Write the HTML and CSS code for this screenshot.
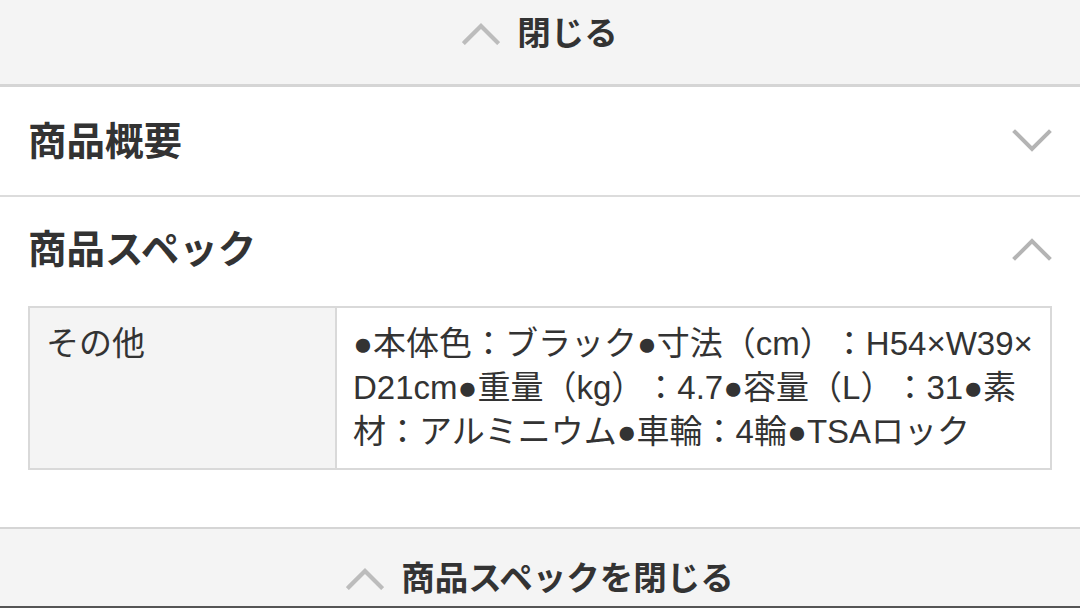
FILE: index.html
```html
<!DOCTYPE html>
<html lang="ja">
<head>
<meta charset="utf-8">
<link rel="stylesheet" href="styles.css">
</head>
<body>
<div class="page">
  <div class="close-bar close-top">
    <svg class="chev-up" viewBox="0 0 40 24" width="38" height="23"><polyline points="3,21 20,4 37,21" fill="none" stroke="#bcbcbc" stroke-width="4.5" stroke-linejoin="miter" stroke-linecap="square"/></svg>
    <span class="close-label">閉じる</span>
  </div>
  <div class="acc-head acc-first">
    <h2 class="acc-title">商品概要</h2>
    <svg class="acc-chev" viewBox="0 0 40 24" width="40" height="24"><polyline points="3,3 20,20 37,3" fill="none" stroke="#b4b4b4" stroke-width="4" stroke-linecap="square"/></svg>
  </div>
  <div class="acc-section">
    <div class="acc-head acc-open">
      <h2 class="acc-title">商品スペック</h2>
      <svg class="acc-chev" viewBox="0 0 40 24" width="40" height="24"><polyline points="3,21 20,4 37,21" fill="none" stroke="#b4b4b4" stroke-width="4" stroke-linecap="square"/></svg>
    </div>
    <table class="spec">
      <tr>
        <th class="spec-key">その他</th>
        <td class="spec-val">●本体色：ブラック●寸法（cm）：H54×W39×<br>D21cm●重量（kg）：4.7●容量（L）：31●素<br>材：アルミニウム●車輪：4輪●TSAロック</td>
      </tr>
    </table>
  </div>
  <div class="close-bar close-bottom">
    <svg class="chev-up" viewBox="0 0 40 24" width="38" height="23"><polyline points="3,21 20,4 37,21" fill="none" stroke="#bcbcbc" stroke-width="4.5" stroke-linecap="square"/></svg>
    <span class="close-label">商品スペックを閉じる</span>
  </div>
  <div class="bottom-edge"></div>
</div>
</body>
</html>
```
FILE: styles.css
```css
html, body {
  margin: 0;
  padding: 0;
  background: #ffffff;
  overflow: hidden;
}
body {
  width: 1080px;
  height: 608px;
  font-family: "Liberation Sans", "Noto Sans CJK JP", sans-serif;
  color: #333333;
  text-spacing-trim: space-all;
}
.page {
  display: flex;
  flex-direction: column;
}
.close-bar {
  background: #f4f4f4;
  display: flex;
  justify-content: center;
  align-items: center;
  gap: 17px;
}
.close-top {
  height: 62px;
  padding-bottom: 22px;
  border-bottom: 3px solid #d5d5d5;
}
.close-bottom {
  height: 94px;
  padding-bottom: 4px;
  border-top: 2px solid #d5d5d5;
  flex-shrink: 0;
}
.close-label {
  font-family: "Noto Sans CJK JP", sans-serif;
  font-weight: 700;
  font-size: 33.5px;
  line-height: 1;
  color: #333333;
}
.chev-up {
  display: block;
  margin-top: 4px;
}
.acc-head {
  display: flex;
  align-items: center;
  justify-content: space-between;
  padding: 0 28px;
}
.acc-first {
  height: 102px;
  padding-bottom: 6px;
  border-bottom: 2px solid #dcdcdc;
}
.acc-open {
  height: 98px;
  padding-bottom: 6px;
}
.acc-title {
  margin: 0;
  font-family: "Noto Sans CJK JP", sans-serif;
  font-weight: 700;
  font-size: 38.5px;
  line-height: 1;
  color: #333333;
}
.acc-chev {
  display: block;
  margin-top: 6px;
}
.acc-section {
  padding-bottom: 57px;
}
.spec {
  margin: 5px 28px 0 28px;
  width: 1024px;
  border-collapse: collapse;
  border: 2px solid #d9d9d9;
  font-size: 33px;
  line-height: 44px;
  color: #333333;
}
.spec-key {
  width: 273px;
  background: #f4f4f4;
  border-right: 2px solid #d9d9d9;
  font-weight: 400;
  text-align: left;
  vertical-align: top;
  padding: 14px 16px;
}
.spec-val {
  background: #ffffff;
  vertical-align: top;
  padding: 14px 16px;
  white-space: nowrap;
}
.bottom-edge {
  position: fixed;
  left: 0;
  right: 0;
  bottom: 0;
  height: 2px;
  background: #555555;
}
```
